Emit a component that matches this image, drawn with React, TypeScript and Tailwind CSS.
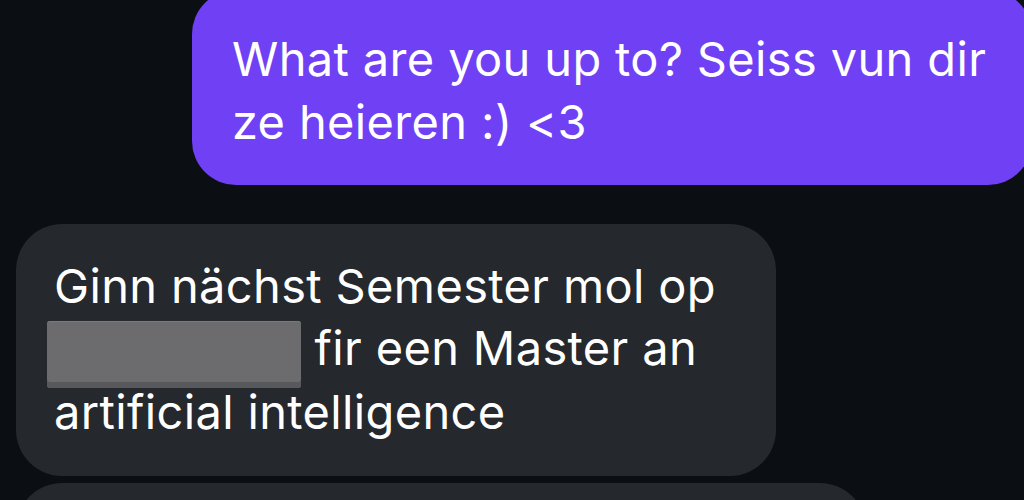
import React from "react";

export default function App() {
  return (
    <div
      className="w-[1024px] h-[500px] overflow-hidden bg-[#0b0f13] flex flex-col text-white"
      style={{ fontFamily: "Inter, 'Liberation Sans', sans-serif" }}
    >
      <div className="flex -mt-[10px] shrink-0">
        <div className="ml-[192px] w-[840px] shrink-0 bg-[#7040f5] rounded-[44px] pl-[40px] pt-[37px] pb-[32px] text-[47px] leading-[63px] tracking-[0.35px]">
          What are you up to? Seiss vun dir
          <br />
          ze heieren :) &lt;3
        </div>
      </div>
      <div className="flex mt-[39px] shrink-0">
        <div className="ml-[16px] w-[760px] bg-[#25282d] rounded-[46px] pl-[38px] pt-[31px] pb-[33px] text-[47px] leading-[62px] tracking-[0.35px]">
          Ginn nächst Semester mol op
          <br />
          <span className="inline-block -ml-[7px] w-[254px] h-[67px] -mt-[5px] align-[-16px] translate-y-[7px] rounded-[3px] bg-[#6c6c6e] shadow-[inset_0_-6px_0_#58595c,inset_0_1px_0_#7a7a7c]" />{" "}
          fir een Master an
          <br />
          artificial intelligence
        </div>
      </div>
      <div className="flex mt-[7px] shrink-0">
        <div className="ml-[16px] w-[850px] h-[120px] bg-[#25282d] rounded-[46px]" />
      </div>
    </div>
  );
}
